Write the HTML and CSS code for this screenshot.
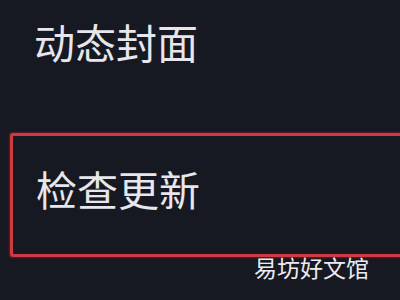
FILE: index.html
```html
<!DOCTYPE html>
<html lang="zh">
<head>
<meta charset="utf-8">
<link rel="stylesheet" href="styles.css">
</head>
<body>
<div class="page">
  <div class="item first">动态封面</div>
  <div class="item boxed">检查更新</div>
  <div class="watermark">易坊好文馆</div>
</div>
</body>
</html>
```
FILE: styles.css
```css
html, body {
  margin: 0;
  padding: 0;
  background: #161822;
}
.page {
  width: 400px;
  height: 300px;
  overflow: hidden;
  display: flex;
  flex-direction: column;
  font-family: "Noto Sans CJK SC", "Noto Sans", sans-serif;
  color: #e6e6ec;
}
.item {
  font-size: 41px;
  line-height: 41px;
  letter-spacing: 0;
}
.first {
  padding: 21px 0 0 34px;
}
.boxed {
  margin: 71px 0 0 10px;
  width: 420px;
  height: 124px;
  box-sizing: border-box;
  border: 3px solid #cc3a42;
  border-radius: 3px;
  box-shadow: 0 0 2px 1px #6a1a20;
  padding: 32px 0 0 23px;
}
.watermark {
  align-self: flex-start;
  margin: -1px 0 0 254px;
  font-size: 23px;
  line-height: 23px;
  color: #ececf0;
}
```
